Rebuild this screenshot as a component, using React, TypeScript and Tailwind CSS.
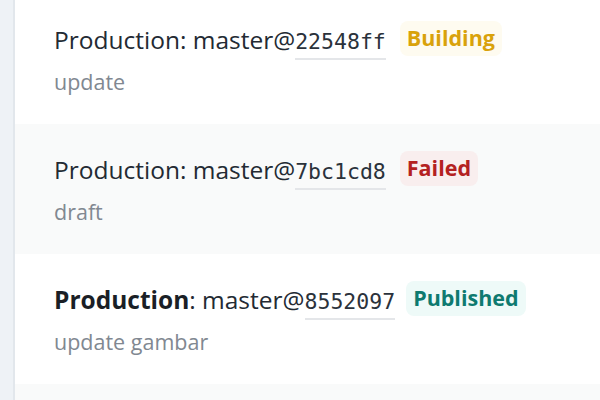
import React from "react";

type Item = {
  hash: string;
  status: "Building" | "Failed" | "Published";
  msg: string;
  bold?: boolean;
};

const items: Item[] = [
  { hash: "22548ff", status: "Building", msg: "update" },
  { hash: "7bc1cd8", status: "Failed", msg: "draft" },
  { hash: "8552097", status: "Published", msg: "update gambar", bold: true },
  { hash: "", status: "Published", msg: "" },
];

function Badge({ status }: { status: Item["status"] }) {
  if (status === "Building")
    return (
      <span className="ml-[14px] rounded-lg bg-[#fefbf0] px-[7px] h-[35px] flex items-center text-[21.5px] font-bold text-[#d9a20b]">
        Building
      </span>
    );
  if (status === "Failed")
    return (
      <span className="ml-[14px] rounded-lg bg-[#f9eeee] px-[7px] h-[35px] flex items-center text-[21.5px] font-bold text-[#b42121]">
        Failed
      </span>
    );
  return (
    <span className="ml-[11px] rounded-lg bg-[#eefaf8] px-[7px] h-[35px] flex items-center text-[21.5px] font-bold text-[#0e7a70]">
      Published
    </span>
  );
}

export default function App() {
  return (
    <div
      className="flex h-[400px] w-[600px] overflow-hidden bg-white"
      style={{ fontFamily: '"Open Sans", "Noto Sans", sans-serif' }}
    >
      <div className="w-[15px] shrink-0 bg-[#eef2f6] border-r-2 border-[#e2e7ec]" />
      <div className="flex-1 -mt-[6px] flex flex-col">
        {items.map((it, i) => (
          <div
            key={i}
            className={`h-[130px] shrink-0 pl-[39px] pt-[26px] ${i % 2 === 1 ? "bg-[#f9fafa]" : "bg-white"}`}
          >
            {it.hash && (
              <>
                <div className="flex items-center h-[36px]">
                  <span className="mt-[5px] text-[24.5px] leading-[36px] text-[#232a33]">
                    {it.bold ? (
                      <span className="font-bold text-[#1a1f26]">Production</span>
                    ) : (
                      "Production"
                    )}
                    : master@
                    <span
                      className="border-b-2 border-[#e4e6e9] pb-[4px] text-[21.5px] text-[#2b323b]"
                      style={{ fontFamily: '"DejaVu Sans Mono", monospace' }}
                    >
                      {it.hash}
                    </span>
                  </span>
                  <Badge status={it.status} />
                </div>
                <div className="mt-[11px] text-[21.5px] leading-[30px] text-[#818891]">{it.msg}</div>
              </>
            )}
          </div>
        ))}
      </div>
    </div>
  );
}
